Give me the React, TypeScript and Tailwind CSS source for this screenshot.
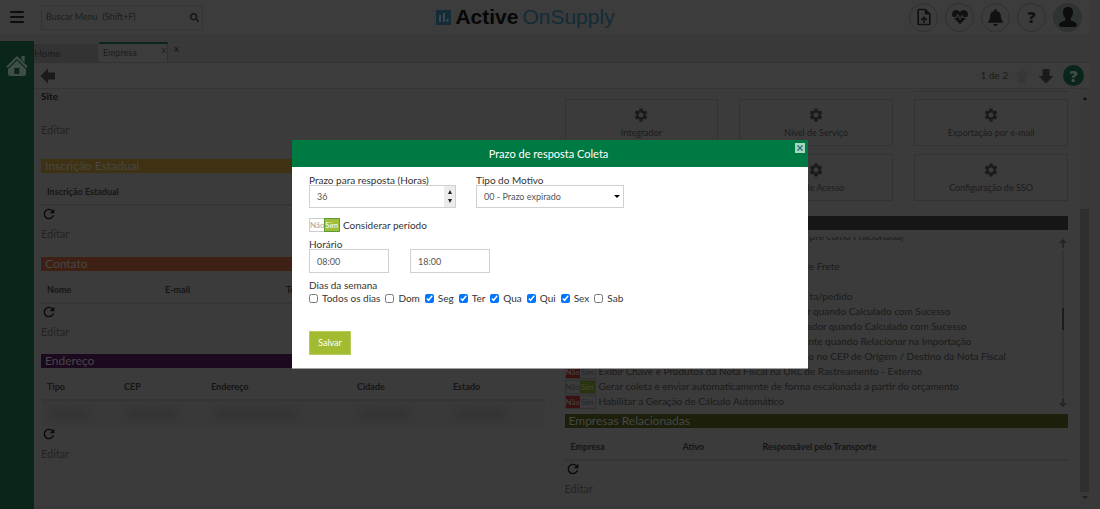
import { useState, type ReactNode } from "react";
import clsx from "clsx";
import { FaBell, FaHeartbeat, FaSearch } from "react-icons/fa";
import { MdOutlineUploadFile, MdRefresh, MdSettings } from "react-icons/md";

function HomeIcon() {
    return (
        <svg viewBox="0 0 22 22" className="w-[22px] h-[22px]" fill="#3f4f48">
            <path d="M15.500 1h3.200v6.600l-3.200-3.200z" />
            <path d="M11 1 .3 11.600l1.500 1.300L11 4l9.200 8.900 1.500-1.300z" />
            <path d="M11 5.400 2 14.200V18.500q0 2.500 2.500 2.500h13q2.500 0 2.500-2.500v-4.300z" />
            <rect x="8.300" y="13" width="5" height="6" fill="#0a2519" />
        </svg>
    );
}

function BigArrow({ className }: { className?: string }) {
    return (
        <svg viewBox="0 0 16 16" className={clsx("w-4 h-4", className)} fill="currentColor">
            <path d="M0.500 8 8 .5v4h7v7H8v4z" />
        </svg>
    );
}

function UserIcon() {
    return (
        <svg viewBox="0 0 20 22" className="w-[18px] h-5" fill="#0d0d0d">
            <path d="M10 0c3.600 0 5.800 2.400 5.500 6.300-.2 2.800-1.200 4.700-2.600 6.100v2.200c.6 1.100 6.600 1.900 6.900 4.400.2 1.900-.8 3-2.300 3h-15C1 22 0 20.900.2 19c.3-2.500 6.300-3.300 6.900-4.400v-2.200C5.700 11 4.700 9.100 4.500 6.300 4.200 2.400 6.400 0 10 0z" />
        </svg>
    );
}

function Logo() {
    return (
        <div className="mr-[41px] flex items-center gap-1 font-['Liberation_Sans',sans-serif] text-[21px] leading-6">
            <svg viewBox="0 0 15 15" className="w-[15px] h-[15px]">
                <rect width="15" height="15" fill="#142b38" />
                <path d="M3 5h2v7H3zM7 3h2v9H7zM10.500 9h2v3h-2z" fill="#3d464b" />
            </svg>
            <span className="font-bold text-[#070707]">Active</span>
            <span className="text-[#142b38]">OnSupply</span>
        </div>
    );
}

function RoundButton({ label, children, className }: { label: string; children: ReactNode; className?: string }) {
    return (
        <button
            type="button"
            aria-label={label}
            className={clsx("w-[29px] h-[29px] rounded-full border border-[#303030] flex items-center justify-center text-[#111111]", className)}
        >
            {children}
        </button>
    );
}

function Header() {
    return (
        <header className="h-[34px] mr-[10px] pl-[10px] pr-2 flex items-center bg-[#3c3c3c]">
            <div className="flex-1 flex items-center gap-[17px]">
                <button type="button" aria-label="Menu" className="w-[14px] flex flex-col gap-[3px]">
                    <span className="h-[2px] rounded bg-[#0c0c0c]" />
                    <span className="h-[2px] rounded bg-[#0c0c0c]" />
                    <span className="h-[2px] rounded bg-[#0c0c0c]" />
                </button>
                <div className="w-[162px] h-[25px] pl-1 pr-[3px] flex items-center border border-[#343434]">
                    <input
                        aria-label="Buscar Menu"
                        placeholder="Buscar Menu  (Shift+F)"
                        className="flex-1 min-w-0 bg-transparent outline-none whitespace-pre text-[9px] placeholder:text-[#1c1c1c]"
                    />
                    <FaSearch className="w-[9px] h-[9px] text-[#151515]" />
                </div>
            </div>
            <Logo />
            <div className="flex-1 flex justify-end gap-[7px]">
                <RoundButton label="Enviar arquivo"><MdOutlineUploadFile className="w-5 h-5" /></RoundButton>
                <RoundButton label="Saúde"><FaHeartbeat className="w-4 h-4" /></RoundButton>
                <RoundButton label="Notificações"><FaBell className="w-[15px] h-[17px]" /></RoundButton>
                <RoundButton label="Ajuda"><span className="font-['Open_Sans',sans-serif] font-extrabold text-base">?</span></RoundButton>
                <RoundButton label="Usuário" className="bg-[#2f3333]"><UserIcon /></RoundButton>
            </div>
        </header>
    );
}

function Tabs() {
    return (
        <div className="h-[29px] flex items-end border-b border-[#333333] text-[#1c1c1c]">
            <button type="button" className="w-[64px] h-[18px] text-left text-[10px] bg-[#333333]">Home</button>
            <div className="ml-px w-[69px] h-5 pl-1 pr-px flex items-center justify-between border-t-2 border-r border-t-[#0a2519] border-r-[#303030] bg-[#3c3c3c] text-[9px]">
                <button type="button">Empresa</button>
                <button type="button" aria-label="Fechar aba" className="self-start leading-3">x</button>
            </div>
            <button type="button" aria-label="Fechar todas" className="ml-[6px] self-center text-[10px] leading-3 text-[#111111]">x</button>
        </div>
    );
}

function Toolbar() {
    return (
        <div className="h-[26px] pl-[6px] pr-[6px] flex items-center border-b border-[#353535] bg-[#3c3c3c] text-[#1a1a1a]">
            <button type="button" aria-label="Voltar"><BigArrow /></button>
            <span className="ml-auto text-[10px]">1 de 2</span>
            <button type="button" aria-label="Anterior" className="ml-[6px] text-[#373737]"><BigArrow className="rotate-90" /></button>
            <button type="button" aria-label="Próximo" className="ml-2"><BigArrow className="-rotate-90" /></button>
            <button
                type="button"
                aria-label="Ajuda"
                className="ml-[9px] w-[21px] h-[21px] rounded-full bg-[#0a2519] text-[#3f4f48] font-['Open_Sans',sans-serif] font-extrabold text-base leading-5"
            >
                ?
            </button>
        </div>
    );
}

function SectionTitle({ children, className }: { children?: ReactNode; className: string }) {
    return <h2 className={clsx("h-[14px] pl-1 text-xs leading-[14px] text-[#474747]", className)}>{children}</h2>;
}

const bodyTh = "h-8 pt-[6px] pl-[6px] text-left align-middle font-bold whitespace-nowrap";

function SectionTable({ columns, children }: { columns: { name: string; width: string }[]; children?: ReactNode }) {
    return (
        <>
            <table className="w-full table-fixed border-collapse text-[9px] text-[#151515]">
                <thead>
                    <tr className="border-b-2 border-[#353535]">
                        {columns.map((column) => (
                            <th key={column.name} className={clsx(bodyTh, column.width)}>{column.name}</th>
                        ))}
                    </tr>
                </thead>
                {children}
            </table>
            <button type="button" aria-label="Atualizar" className="block text-[#0a0a0a]">
                <MdRefresh className="w-4 h-4" />
            </button>
            <EditLink className="mt-1" />
        </>
    );
}

function EditLink({ className }: { className?: string }) {
    return <a href="#" className={clsx("block w-fit text-[11px] leading-4 text-[#232323]", className)}>Editar</a>;
}

function BlurredRow() {
    const widths = ["w-9", "w-12", "w-20", "w-12", "w-12"];
    return (
        <tbody>
            <tr className="bg-[#393939]">
                {widths.map((width, i) => (
                    <td key={i} className="h-[26px] pl-[10px]">
                        <div className={clsx("h-2 bg-[#323232] blur-[4px]", width)} />
                    </td>
                ))}
            </tr>
        </tbody>
    );
}

function LeftColumn() {
    return (
        <div className="min-w-0">
            <p className="text-[10px] leading-[15px] font-bold text-[#0e0e0e]">Site</p>
            <EditLink className="mt-[18px]" />
            <SectionTitle className="mt-[21px] bg-[#3e3213]">Inscrição Estadual</SectionTitle>
            <SectionTable columns={[{ name: "Inscrição Estadual", width: "w-full" }]} />
            <SectionTitle className="mt-[15px] bg-[#3e2014]">Contato</SectionTitle>
            <SectionTable
                columns={[
                    { name: "Nome", width: "w-[118px]" },
                    { name: "E-mail", width: "w-[121px]" },
                    { name: "Te", width: "w-auto" },
                ]}
            />
            <SectionTitle className="mt-[14px] bg-[#1c0920]">Endereço</SectionTitle>
            <SectionTable
                columns={[
                    { name: "Tipo", width: "w-[77px]" },
                    { name: "CEP", width: "w-[87px]" },
                    { name: "Endereço", width: "w-[146px]" },
                    { name: "Cidade", width: "w-[96px]" },
                    { name: "Estado", width: "w-auto" },
                ]}
            >
                <BlurredRow />
            </SectionTable>
        </div>
    );
}

function Card({ label }: { label: string }) {
    return (
        <button type="button" className="h-[47px] pt-[7px] flex flex-col items-center border border-[#333333] text-[#1b1b1b]">
            <MdSettings className="w-4 h-4" />
            <span className="mt-[3px] text-[9px] leading-[14px]">{label}</span>
        </button>
    );
}

function Toggle({ on, dim, label }: { on: boolean; dim?: boolean; label: string }) {
    const [value, setValue] = useState(on);
    const active = dim
        ? (value ? "bg-[#28340f] text-[#464646]" : "bg-[#3a1010] text-[#464646]")
        : "bg-[#a2c037] text-white outline outline-[#5c9c3c]";
    const idle = dim ? "text-[#262626]" : "text-[#a3a3a3]";
    return (
        <button
            type="button"
            role="switch"
            aria-checked={value}
            aria-label={label}
            onClick={() => setValue(!value)}
            className={clsx(
                "shrink-0 w-[31px] h-[14px] flex border text-[8px] leading-3",
                dim ? "border-[#313131]" : "border-[#cccccc]"
            )}
        >
            <span className={clsx("flex-1", value ? idle : active)}>Não</span>
            <span className={clsx("flex-1", value ? active : idle)}>Sim</span>
        </button>
    );
}

const coveredRows = [
    { text: "pre como Fracionada)", width: "w-[339px]" },
    { text: "", width: "w-0" },
    { text: "de Frete", width: "w-[275px]" },
    { text: "", width: "w-0" },
    { text: "ta/pedido", width: "w-[288px]" },
    { text: "r quando Calculado com Sucesso", width: "w-[386px]" },
    { text: "ador quando Calculado com Sucesso", width: "w-[402px]" },
    { text: "nte quando Relacionar na Importação", width: "w-[407px]" },
    { text: "do no CEP de Origem / Destino da Nota Fiscal", width: "w-[441px]" },
];

const parameters = [
    { text: "Exibir Chave e Produtos da Nota Fiscal na URL de Rastreamento - Externo", on: false },
    { text: "Gerar coleta e enviar automaticamente de forma escalonada a partir do orçamento", on: true },
    { text: "Habilitar a Geração de Cálculo Automático", on: false },
];

function ParameterList() {
    return (
        <div className="mt-[7px] h-[172px] flex text-[10px] text-[#1a1a1a]">
            <div className="flex-1 min-w-0 overflow-hidden flex flex-col justify-end">
                {coveredRows.map((row, i) => (
                    <div key={i} className={clsx("shrink-0 h-[15px] flex justify-end whitespace-nowrap leading-[15px]", row.width)}>{row.text}</div>
                ))}
                {parameters.map((row) => (
                    <div key={row.text} className="shrink-0 h-[15px] flex items-center gap-[3px] whitespace-nowrap leading-[15px]">
                        <Toggle on={row.on} label={row.text} dim />
                        <span>{row.text}</span>
                    </div>
                ))}
            </div>
            <div className="w-[11px] shrink-0 py-[2px] flex flex-col items-center text-[#222222]">
                <svg viewBox="0 0 8 9" className="w-2 h-[9px]" fill="none" stroke="currentColor" strokeWidth="1.500">
                    <path d="M4 9V1M1 4l3-3 3 3" />
                </svg>
                <div className="my-[2px] flex-1 w-[2px] pt-[58px] bg-[#343434]">
                    <div className="h-[22px] bg-[#1c1c1c]" />
                </div>
                <svg viewBox="0 0 8 9" className="w-2 h-[9px]" fill="none" stroke="currentColor" strokeWidth="1.500">
                    <path d="M4 0v8M1 5l3 3 3-3" />
                </svg>
            </div>
        </div>
    );
}

function RightColumn() {
    return (
        <div className="min-w-0">
            <div className="grid grid-cols-3 gap-x-[21px] gap-y-2">
                <div className="col-start-3 h-[3px] -mb-px border-b border-[#333333]" />
                <Card label="Integrador" />
                <Card label="Nível de Serviço" />
                <Card label="Exportação por e-mail" />
                <div />
                <Card label="Log de Acesso" />
                <Card label="Configuração de SSO" />
            </div>
            <SectionTitle className="mt-[15px] bg-[#161616]" />
            <ParameterList />
            <SectionTitle className="mt-[5px] bg-[#1c200a]">Empresas Relacionadas</SectionTitle>
            <SectionTable
                columns={[
                    { name: "Empresa", width: "w-[112px]" },
                    { name: "Ativo", width: "w-[80px]" },
                    { name: "Responsável pelo Transporte", width: "w-auto" },
                ]}
            />
        </div>
    );
}

function ScrollBar() {
    return (
        <div className="w-[11px] shrink-0 py-1 flex flex-col items-center bg-[#393939]">
            <span className="mt-1 border-x-2 border-b-[3px] border-x-transparent border-b-[#0c0c0c]" />
            <div className="mt-[109px] mb-1 flex-1 w-[9px] bg-[#2f2f2f]" />
            <span className="mb-[2px] border-x-[3px] border-t-[3px] border-x-transparent border-t-[#1f1f1f]" />
        </div>
    );
}

const days = [
    { name: "Todos os dias", checked: false },
    { name: "Dom", checked: false },
    { name: "Seg", checked: true },
    { name: "Ter", checked: true },
    { name: "Qua", checked: true },
    { name: "Qui", checked: true },
    { name: "Sex", checked: true },
    { name: "Sab", checked: false },
];

const fieldClass = "border border-[#d0d0d0] bg-white pl-[7px] text-[9px] text-[#555555] outline-none";

function DeadlineDialog() {
    return (
        <div className="fixed inset-0 flex items-start justify-center pt-[140px]">
            <div role="dialog" aria-labelledby="dialog-title" className="w-[516px] max-w-full border-b border-[#a0a0a0] bg-white text-[10px] leading-[14px] text-[#333333]">
                <div className="h-[27px] flex items-center bg-[#007a43]">
                    <h1 id="dialog-title" className="flex-1 pl-[10px] text-center text-[11px] text-white">Prazo de resposta Coleta</h1>
                    <button type="button" aria-label="Fechar" className="self-start mt-[3px] mr-[3px] w-[10px] h-[10px] flex items-center justify-center bg-[#a8d3bd]">
                        <svg viewBox="0 0 6 6" className="w-[6px] h-[6px]" stroke="#2b7582" strokeWidth="1.500">
                            <path d="M.5.5l5 5M5.500.5l-5 5" />
                        </svg>
                    </button>
                </div>
                <form className="px-[17px] pt-[6px] pb-[13px]" onSubmit={(e) => e.preventDefault()}>
                    <div className="flex gap-5">
                        <div className="w-[147px]">
                            <label htmlFor="deadline" className="block h-3">Prazo para resposta (Horas)</label>
                            <div className="h-[23px] flex border border-[#d0d0d0]">
                                <input id="deadline" defaultValue="36" className="flex-1 min-w-0 pl-[7px] text-[9px] text-[#555555] outline-none" />
                                <div className="w-[11px] py-1 flex flex-col items-center justify-between bg-[#ececec]">
                                    <button type="button" aria-label="Aumentar" className="border-x-2 border-b-4 border-x-transparent border-b-[#222222]" />
                                    <button type="button" aria-label="Diminuir" className="border-x-2 border-t-4 border-x-transparent border-t-[#222222]" />
                                </div>
                            </div>
                        </div>
                        <div className="w-[148px]">
                            <label htmlFor="reason" className="block h-3">Tipo do Motivo</label>
                            <div className="h-[23px] flex items-center border border-[#d0d0d0] pr-[3px]">
                                <select id="reason" className="flex-1 min-w-0 h-full appearance-none pl-[7px] text-[9px] text-[#555555] outline-none">
                                    <option>00 - Prazo expirado</option>
                                </select>
                                <span className="border-x-[3px] border-t-[3px] border-x-transparent border-t-black" />
                            </div>
                        </div>
                    </div>
                    <div className="mt-[10px] flex items-center gap-[3px]">
                        <Toggle on label="Considerar período" />
                        <span>Considerar período</span>
                    </div>
                    <label htmlFor="start" className="mt-[5px] block h-3">Horário</label>
                    <div className="flex gap-[21px]">
                        <input id="start" defaultValue="08:00" className={clsx("w-20 h-6", fieldClass)} />
                        <input aria-label="Horário final" defaultValue="18:00" className={clsx("w-20 h-6", fieldClass)} />
                    </div>
                    <p className="mt-[5px] h-[13px]">Dias da semana</p>
                    <div className="flex gap-[5px]">
                        {days.map((day) => (
                            <label key={day.name} className="flex items-center gap-1">
                                <input type="checkbox" defaultChecked={day.checked} className="w-[9px] h-[9px] accent-[#0075ff]" />
                                {day.name}
                            </label>
                        ))}
                    </div>
                    <button type="submit" className="mt-[26px] w-[42px] h-6 border border-[#b4cd5c] bg-[#a2bb31] text-[9px] text-white">Salvar</button>
                </form>
            </div>
        </div>
    );
}

export default function App() {
    return (
        <div className="min-h-screen flex flex-col bg-[#393939] font-['Lato','Open_Sans',sans-serif]">
            <Header />
            <div className="flex-1 flex">
                <nav className="mt-[7px] w-[34px] shrink-0 pt-[14px] flex justify-center items-start bg-[#0a2519]">
                    <a href="#" aria-label="Início"><HomeIcon /></a>
                </nav>
                <div className="flex-1 min-w-0 mr-[10px] flex flex-col">
                    <Tabs />
                    <Toolbar />
                    <main className="flex-1 mb-1 flex bg-[#3b3b3b]">
                        <div className="flex-1 min-w-0 grid grid-cols-2 gap-5 pl-[7px] pr-[11px]">
                            <LeftColumn />
                            <RightColumn />
                        </div>
                        <ScrollBar />
                    </main>
                </div>
            </div>
            <DeadlineDialog />
        </div>
    );
}
